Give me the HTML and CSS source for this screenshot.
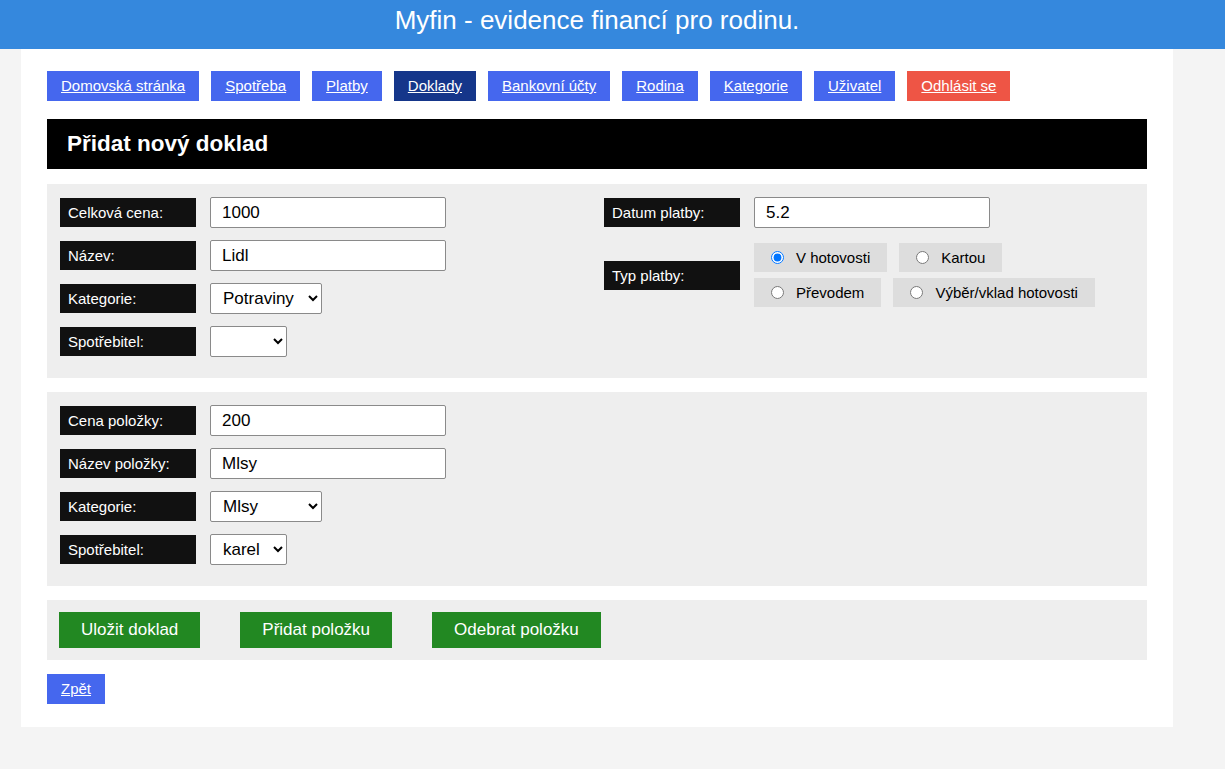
FILE: index.html
```html
<!DOCTYPE html>
<html lang="cs">
<head>
<meta charset="utf-8">
<title>Myfin</title>
<link rel="stylesheet" href="styles.css">
</head>
<body>
<header class="top">
  <div class="top-inner">Myfin - evidence financí pro rodinu.</div>
</header>
<main class="page">
  <nav class="nav">
    <a href="#" class="nav-btn">Domovská stránka</a>
    <a href="#" class="nav-btn">Spotřeba</a>
    <a href="#" class="nav-btn">Platby</a>
    <a href="#" class="nav-btn active">Doklady</a>
    <a href="#" class="nav-btn">Bankovní účty</a>
    <a href="#" class="nav-btn">Rodina</a>
    <a href="#" class="nav-btn">Kategorie</a>
    <a href="#" class="nav-btn">Uživatel</a>
    <a href="#" class="nav-btn logout">Odhlásit se</a>
  </nav>
  <h1 class="title">Přidat nový doklad</h1>

  <section class="panel two-col">
    <div class="col">
      <div class="row"><span class="lbl">Celková cena:</span><input class="inp" type="text" value="1000"></div>
      <div class="row"><span class="lbl">Název:</span><input class="inp" type="text" value="Lidl"></div>
      <div class="row"><span class="lbl">Kategorie:</span><select class="sel w112"><option>Potraviny</option></select></div>
      <div class="row"><span class="lbl">Spotřebitel:</span><select class="sel w77"><option></option></select></div>
    </div>
    <div class="col">
      <div class="row"><span class="lbl">Datum platby:</span><input class="inp" type="text" value="5.2"></div>
      <div class="row row-radio"><span class="lbl">Typ platby:</span>
        <div class="radios">
          <div class="radio-line">
            <label class="radio"><input type="radio" name="typ" checked>V hotovosti</label>
            <label class="radio"><input type="radio" name="typ">Kartou</label>
          </div>
          <div class="radio-line">
            <label class="radio"><input type="radio" name="typ">Převodem</label>
            <label class="radio"><input type="radio" name="typ">Výběr/vklad hotovosti</label>
          </div>
        </div>
      </div>
    </div>
  </section>

  <section class="panel">
    <div class="col">
      <div class="row"><span class="lbl">Cena položky:</span><input class="inp" type="text" value="200"></div>
      <div class="row"><span class="lbl">Název položky:</span><input class="inp" type="text" value="Mlsy"></div>
      <div class="row"><span class="lbl">Kategorie:</span><select class="sel w112"><option>Mlsy</option></select></div>
      <div class="row"><span class="lbl">Spotřebitel:</span><select class="sel w77"><option>karel</option></select></div>
    </div>
  </section>

  <section class="actions">
    <button class="act">Uložit doklad</button>
    <button class="act">Přidat položku</button>
    <button class="act">Odebrat položku</button>
  </section>

  <a href="#" class="nav-btn back">Zpět</a>
</main>
</body>
</html>
```

FILE: styles.css
```css
* { box-sizing: border-box; }
html, body { margin: 0; padding: 0; }
body {
  background: #f4f4f4;
  font-family: "Liberation Sans", Arial, sans-serif;
  color: #000;
}
.top {
  background: #3588dd;
  height: 49px;
}
.top-inner {
  width: 1152px;
  margin-left: 21px;
  text-align: center;
  color: #fff;
  font-size: 26px;
  line-height: 40px;
}
.page {
  width: 1152px;
  margin-left: 21px;
  background: #fff;
  padding: 22px 26px 23px 26px;
  display: flex;
  flex-direction: column;
  align-items: flex-start;
}
.nav {
  display: flex;
  gap: 12px;
}
.nav-btn {
  display: inline-block;
  height: 30px;
  line-height: 30px;
  padding: 0 14px;
  background: #4567ee;
  color: #fff;
  font-size: 15px;
  text-decoration: underline;
}
.nav-btn.active { background: #15368a; }
.nav-btn.logout { background: #ee5545; }
.title {
  align-self: stretch;
  margin: 18px 0 15px 0;
  height: 50px;
  line-height: 50px;
  background: #000;
  color: #fff;
  font-size: 22.5px;
  font-weight: bold;
  padding-left: 20px;
}
.panel {
  align-self: stretch;
  background: #eeeeee;
  padding: 13px 13px 21px 13px;
  margin-bottom: 14px;
}
.two-col {
  display: grid;
  grid-template-columns: 530px 530px;
  column-gap: 14px;
}
.col {
  display: flex;
  flex-direction: column;
  gap: 12px;
}
.row {
  display: flex;
  align-items: center;
  gap: 14px;
  min-height: 31px;
}
.lbl {
  width: 136px;
  height: 29px;
  line-height: 29px;
  background: #111;
  color: #fff;
  font-size: 15px;
  padding-left: 8px;
  flex: none;
}
.inp {
  width: 236px;
  height: 31px;
  border: 1px solid #8a8a8a;
  border-radius: 2px;
  padding: 0 11px;
  font-family: "Liberation Sans", Arial, sans-serif;
  font-size: 17px;
  color: #000;
  background: #fff;
  margin: 0;
}
.sel {
  height: 31px;
  border: 1px solid #8a8a8a;
  border-radius: 2px;
  padding: 0 6px 0 8px;
  font-family: "Liberation Sans", Arial, sans-serif;
  font-size: 17px;
  color: #000;
  background: #fff;
  margin: 0;
}
.w112 { width: 112px; }
.w77 { width: 77px; }
.row-radio { margin-top: 3px; }
.radios {
  display: flex;
  flex-direction: column;
  gap: 6px;
}
.radio-line {
  display: flex;
  gap: 12px;
}
.radio {
  display: flex;
  align-items: center;
  height: 29px;
  background: #dddddd;
  padding: 0 17px;
  font-size: 15px;
}
.radio input {
  width: 13px;
  height: 13px;
  margin: 0 12px 0 0;
}
.actions {
  align-self: stretch;
  background: #eeeeee;
  padding: 12px;
  display: flex;
  gap: 40px;
  margin-bottom: 14px;
}
.act {
  height: 36px;
  padding: 0 22px;
  background: #228822;
  color: #fff;
  border: none;
  font-family: "Liberation Sans", Arial, sans-serif;
  font-size: 17px;
  margin: 0;
}
.back { margin: 0; }
```
